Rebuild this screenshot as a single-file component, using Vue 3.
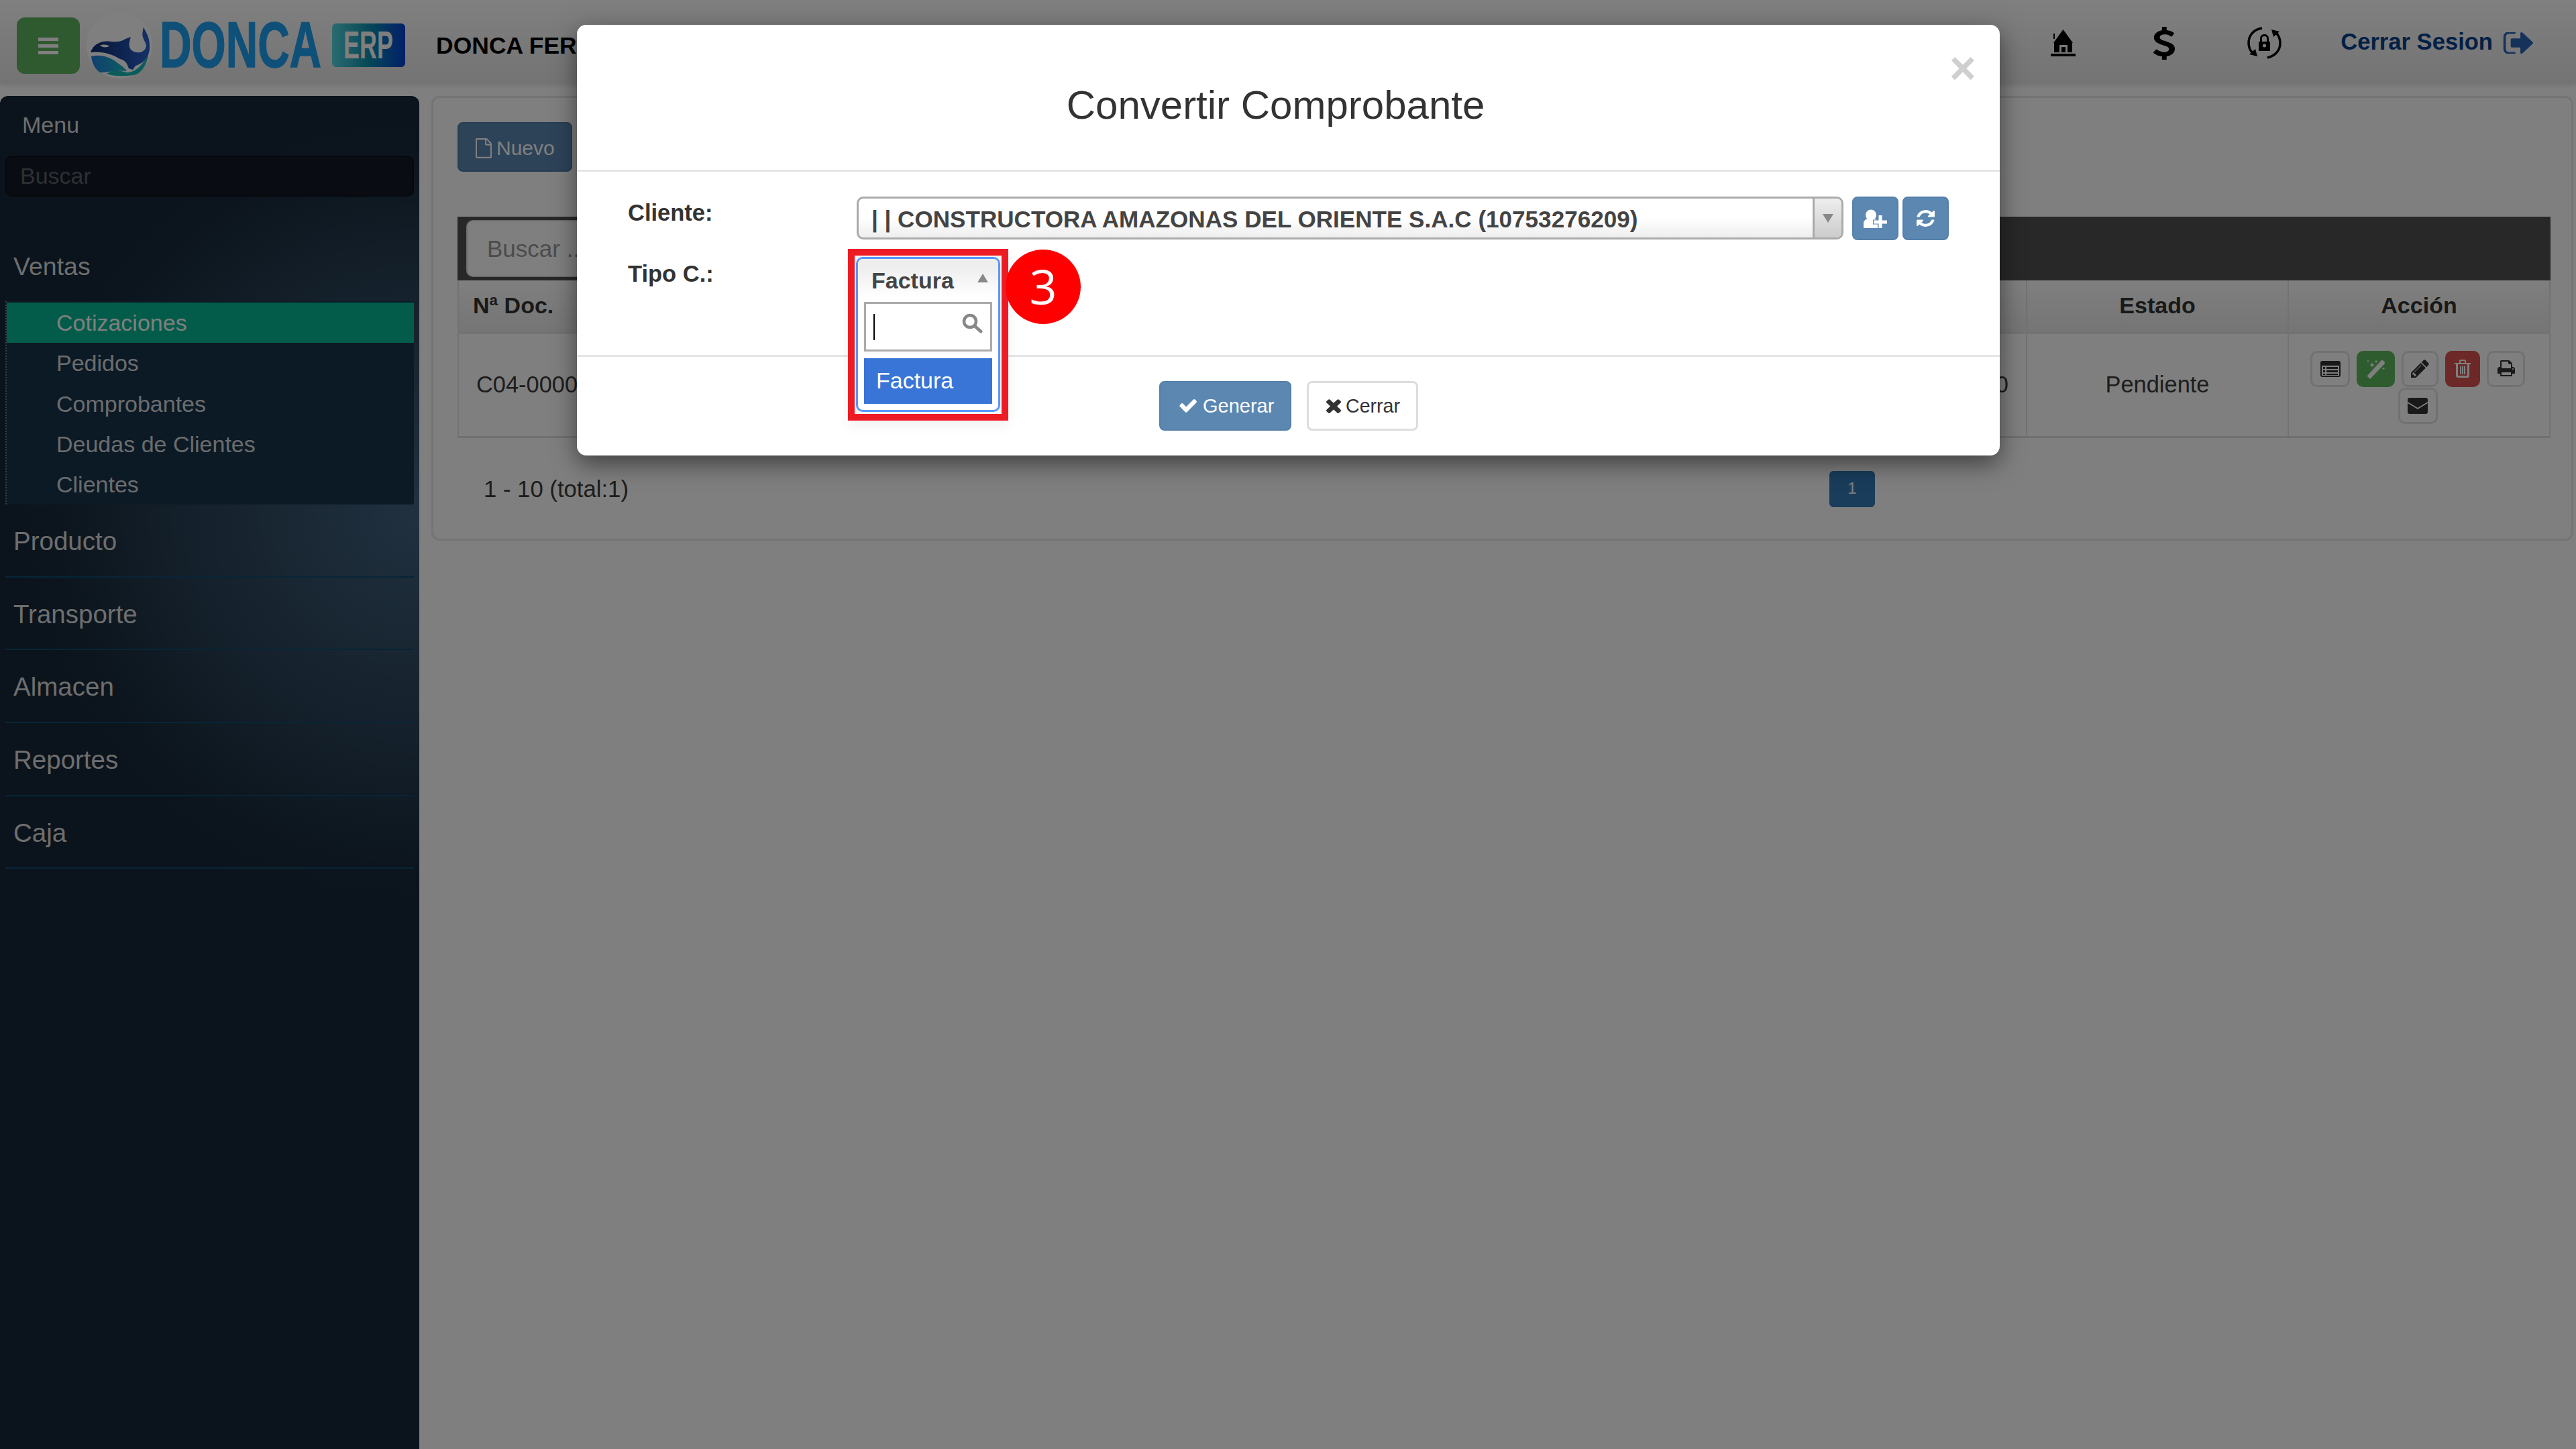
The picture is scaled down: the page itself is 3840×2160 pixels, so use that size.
<script setup>
const menu = ['Cotizaciones', 'Pedidos', 'Comprobantes', 'Deudas de Clientes', 'Clientes']
const sections = ['Producto', 'Transporte', 'Almacen', 'Reportes', 'Caja']
</script>

<template>
  <div class="page">
    <header class="topbar">
      <button class="burger" aria-label="menu">
        <i></i><i></i><i></i>
      </button>
      <div class="logo">
        <svg class="orca" viewBox="0 0 98 99" width="98" height="99">
          <defs>
            <linearGradient id="og" x1="0" x2="1" y1="0" y2="0">
              <stop offset="0" stop-color="#0c2c6c" /><stop offset="1" stop-color="#2a62d0" />
            </linearGradient>
            <linearGradient id="wg" x1="0" x2="1" y1="0" y2="0">
              <stop offset="0" stop-color="#2480e0" /><stop offset="1" stop-color="#18b8c0" />
            </linearGradient>
          </defs>
          <ellipse cx="49" cy="49.5" rx="49" ry="49.5" fill="#ffffff" />
          <path fill="url(#og)" d="M6 60C10 48 22 42 36 44c10 1 16 0 22-4l8-3c-2 7-4 13 0 19 6 6 18 6 22-2 3-6-2-10-3-14-3-6-1-12 0-18 3 8 9 14 9 28 1 16-8 26-21 30l-4 6-6-2c-3-8-5-12-13-14C38 62 20 58 6 60z" />
          <path fill="#fff" d="M20 50c4-2 10-2 14 1-4 2-10 2-14-1z" />
          <path fill="url(#wg)" d="M7 66c15-4 29 2 37 8 8 6 14 10 16 14-10-2-30 2-40 2C12 84 8 76 7 66z" />
          <path fill="#18b8b8" d="M30 92c10-8 22-4 30-2 10 0 20-6 32-26-2 14-10 28-22 30-15 2-30 2-40-2z" />
        </svg>
        <span class="donca"><b>DONCA</b></span>
        <span class="erp"><b>ERP</b></span>
      </div>
      <div class="company">DONCA FERRETERIA</div>
      <nav class="actions">
        <a class="nav-ico">
          <svg width="37" height="40" viewBox="0 0 37 40">
            <path d="M4 20 18.500 0 33 20zM4 6h2v8H4z" />
            <path fill-rule="evenodd" d="M5 20h27v14H5zM13 23v11h3V26h6v8h3V23z" />
            <rect y="36" width="37" height="4" />
          </svg>
        </a>
        <a class="nav-ico">
          <svg width="33" height="49" viewBox="400 32 962 1728" preserveAspectRatio="none">
            <path d="M1362 1185q0 153-99.500 263.500t-258.500 136.500v175q0 14-9 23t-23 9h-135q-13 0-22.500-9.500t-9.500-22.500v-175q-66-9-127.500-31t-101.500-44.500-74-48-46.500-37.500-17.500-18q-17-21-2-41l103-135q7-10 23-12 15-2 24 9l2 2q113 99 243 125 37 8 74 8 81 0 142.500-43t61.500-122q0-28-15-53t-33.500-42-58.500-37.500-66-32-80-32.500q-39-16-61.500-25t-61.500-26.500-62.500-31-56.500-35.500-53.500-42.500-43.500-49-35.500-58-21-66.500-8.500-78q0-138 98-242t255-134v-180q0-13 9.500-22.500t22.500-9.500h135q14 0 23 9t9 23v176q57 6 110.500 23t87 33.500 63.500 37.500 39 29 15 14q17 18 5 38l-81 146q-8 15-23 16-14 3-27-7-3-3-14.500-12t-39-26.500-58.500-32-74.500-26-85.500-11.500q-95 0-155 43t-60 111q0 26 8.500 48t29.500 41.500 39.500 33 56 31 60.500 27 70 27.500q53 20 81 31.500t76 35 75.500 42.500 62 50 53 63.500 31.500 76.500 13 94z" />
          </svg>
        </a>
        <a class="nav-ico">
          <svg width="51" height="50" viewBox="0 0 51 50">
            <path fill="none" stroke="#000" stroke-width="3.500" d="M22 3C8 5 2 15 2 25c0 7 3 12 6 15M30 47c13-3 19-12 19-22 0-7-3-12-6-15" />
            <path d="M3 42l9-8 3 11zM48 8l-9 8-3-11z" />
            <path d="M17 23h17v14H17z" />
            <path fill="none" stroke="#000" stroke-width="3" d="M20.500 23v-5c0-6 10-6 10 0v5" />
            <circle cx="25.500" cy="29" r="2.500" fill="#fff" />
          </svg>
        </a>
        <a class="logout">
          <span>Cerrar Sesion</span>
          <svg width="46" height="32" viewBox="0 288 1632 1216" preserveAspectRatio="none">
            <path d="M704 1440q0 4 1 20t.5 26.500-3 23.500-10 19.500-20.500 6.500h-320q-119 0-203.500-84.500t-84.500-203.500v-704q0-119 84.500-203.500t203.500-84.500h320q13 0 22.500 9.500t9.500 22.500q0 4 1 20t.5 26.500-3 23.500-10 19.500-20.500 6.500h-320q-66 0-113 47t-47 113v704q0 66 47 113t113 47h288l11.500 1 11.500 3 8 5.500 7 9 2 13.500zm928-544q0 26-19 45l-544 544q-19 19-45 19t-45-19-19-45v-288h-448q-26 0-45-19t-19-45v-384q0-26 19-45t45-19h448v-288q0-26 19-45t45-19 45 19l544 544q19 19 19 45z" />
          </svg>
        </a>
      </nav>
    </header>

    <div class="layout">
      <aside class="sidebar">
        <div class="side-title">Menu</div>
        <input class="side-search" placeholder="Buscar" />
        <div class="group open">Ventas</div>
        <ul class="submenu">
          <li v-for="(m, i) in menu" :key="m" :class="{ active: i === 0 }">{{ m }}</li>
        </ul>
        <div v-for="s in sections" :key="s" class="group">{{ s }}</div>
      </aside>

      <main class="panel">
        <button class="btn-new">
          <svg width="24" height="30" viewBox="128 0 1536 1792" preserveAspectRatio="none"><path d="M1596 380q28 28 48 76t20 88v1152q0 40-28 68t-68 28h-1344q-40 0-68-28t-28-68v-1600q0-40 28-68t68-28h896q40 0 88 20t76 48zm-444-244v376h376q-10-29-22-41l-313-313q-12-12-41-22zm384 1528v-1024h-416q-40 0-68-28t-28-68v-416h-768v1536h1280z" /></svg>
          Nuevo
        </button>
        <div class="toolbar"><input class="table-search" placeholder="Buscar ..." /></div>
        <table class="grid">
          <colgroup><col class="c-doc" /><col class="c-cli" /><col class="c-tot" /><col class="c-est" /><col class="c-acc" /></colgroup>
          <thead>
            <tr><th class="left">Nª Doc.</th><th></th><th></th><th>Estado</th><th>Acción</th></tr>
          </thead>
          <tbody>
            <tr>
              <td class="left doc">C04-00001</td>
              <td></td>
              <td class="right">1,250.00</td>
              <td class="center">Pendiente</td>
              <td class="acts">
                <div class="act-wrap">
                  <button class="act w59">
                    <svg width="30" height="24" viewBox="0 0 30 24"><path fill-rule="evenodd" d="M3 0h24a3 3 0 0 1 3 3v18a3 3 0 0 1-3 3H3a3 3 0 0 1-3-3V3a3 3 0 0 1 3-3zM2 7v15h26V7zM4 9h3v3H4zM9 9h17v3H9zM4 14h3v3H4zM9 14h17v3H9zM4 19h3v2H4zM9 19h17v2H9z" /></svg>
                  </button>
                  <button class="act ok w57">
                    <svg width="28" height="30" viewBox="0 0 28 30"><path d="M1 25 21 3q2-2 4 0l1 1q2 2 0 4L6 29q-1 1-2 0l-3-3q-1-.500 0-1z" fill="#fff" /><path d="M8 5l1 3 3 1-3 1-1 3-1-3-3-1 3-1zM14 1l.700 2 2 .700-2 .700-.700 2-.700-2-2-.700 2-.700zM2 1l.500 1.500L4 3l-1.500.500L2 5l-.500-1.500L0 3l1.500-.500zM25 12l.500 2 2 .500-2 .500-.500 2-.500-2-2-.500 2-.500z" fill="#fff" /></svg>
                  </button>
                  <button class="act w55">
                    <svg width="27" height="27" viewBox="128 128 1536 1536"><path d="M491 1536l91-91-235-235-91 91v107h128v128h107zm523-928q0-22-22-22-10 0-17 7l-542 542q-7 7-7 17 0 22 22 22 10 0 17-7l542-542q7-7 7-17zm-54-192l416 416-832 832h-416v-416zm683 96q0 53-37 90l-166 166-416-416 166-165q36-38 90-38 53 0 91 38l235 234q37 39 37 91z" /></svg>
                  </button>
                  <button class="act bad w52">
                    <svg width="24" height="27" viewBox="0 0 24 27"><path fill="#fff" fill-rule="evenodd" d="M0 5h24v2h-2v17a3 3 0 0 1-3 3H5a3 3 0 0 1-3-3V7H0zM7 2a2 2 0 0 1 2-2h6a2 2 0 0 1 2 2v3h-2V2H9v3H7zM5 7v17h14V7zM8 10h2v12H8zM11 10h2v12h-2zM14 10h2v12h-2z" /></svg>
                  </button>
                  <button class="act w57">
                    <svg width="28" height="26" viewBox="0 0 1792 1664"><path transform="translate(0 -128)" d="M448 1536h896v-256h-896v256zm0-640h896v-384h-160q-40 0-68-28t-28-68v-160h-640v640zm1152 64q0-26-19-45t-45-19-45 19-19 45 19 45 45 19 45-19 19-45zm128 0v416q0 13-9.500 22.500t-22.500 9.500h-224v160q0 40-28 68t-68 28h-960q-40 0-68-28t-28-68v-160h-224q-13 0-22.500-9.500t-9.500-22.500v-416q0-79 56.500-135.500t135.500-56.500h64v-544q0-40 28-68t68-28h672q40 0 88 20t76 48l152 152q28 28 48 76t20 88v256h64q79 0 135.500 56.500t56.500 135.500z" /></svg>
                  </button>
                  <button class="act w59">
                    <svg width="30" height="24" viewBox="0 0 30 24"><rect width="30" height="24" rx="3" /><path d="M0 7l15 9 15-9" fill="none" stroke="#fff" stroke-width="1.800" /></svg>
                  </button>
                </div>
              </td>
            </tr>
          </tbody>
        </table>
        <div class="pager-row">
          <span class="range">1 - 10 (total:1)</span>
          <span class="page-num">1</span>
        </div>
      </main>
    </div>

    <div class="backdrop"></div>

    <section class="modal">
      <div class="modal-head">
        <h1>Convertir Comprobante</h1>
        <span class="close">×</span>
      </div>
      <div class="modal-body">
        <div class="row">
          <label>Cliente:</label>
          <div class="select">
            <span class="select-text">| | CONSTRUCTORA AMAZONAS DEL ORIENTE S.A.C (10753276209)</span>
            <span class="select-arrow"><i></i></span>
          </div>
          <button class="btn-sq first">
            <svg width="35" height="28" viewBox="0 0 35 28"><circle cx="11" cy="8.500" r="8" fill="#fff" /><path d="M0 28v-7c0-4 3-6 6-7 3 3 7 3 10 0 2 .500 4 1.500 5 3v11z" fill="#fff" /><path d="M22.500 9h5v7.500H35v5h-7.500V28h-5v-6.500H15v-5h7.500z" fill="#fff" stroke="#5b87b1" stroke-width="2" paint-order="stroke" /></svg>
          </button>
          <button class="btn-sq">
            <svg width="27" height="25" viewBox="128 128 1536 1536" preserveAspectRatio="none"><path fill="#fff" d="M1639 1056q0 5-1 7-64 268-268 434.500t-478 166.500q-146 0-282.500-55t-243.500-157l-129 129q-19 19-45 19t-45-19-19-45v-448q0-26 19-45t45-19h448q26 0 45 19t19 45-19 45l-137 137q71 66 161 102t187 36q134 0 250-65t186-179q11-17 53-117 8-23 30-23h192q13 0 22.500 9.500t9.500 22.500zm25-800v448q0 26-19 45t-45 19h-448q-26 0-45-19t-19-45 19-45l138-138q-148-137-349-137-134 0-250 65t-186 179q-11 17-53 117-8 23-30 23h-199q-13 0-22.500-9.500t-9.500-22.500v-7q65-268 270-434.500t480-166.500q146 0 284 55.500t245 156.500l130-129q19-19 45-19t45 19 19 45z" /></svg>
          </button>
        </div>
        <div class="row second">
          <label>Tipo C.:</label>
          <div class="tipo">
            <div class="mark">
              <div class="drop">
                <div class="drop-head">
                  <span>Factura</span>
                  <i class="tri-up"></i>
                </div>
                <div class="drop-search">
                  <i class="caret"></i>
                  <svg width="31" height="30" viewBox="0 0 31 30"><circle cx="12" cy="12" r="9" fill="none" stroke="#888" stroke-width="4.500" /><path d="M19 19l9 8" stroke="#888" stroke-width="5" stroke-linecap="round" /></svg>
                </div>
                <div class="drop-option">Factura</div>
              </div>
            </div>
            <div class="badge">3</div>
          </div>
        </div>
      </div>
      <div class="modal-foot">
        <button class="btn-go">
          <svg width="26" height="22" viewBox="100 280 1571 1300" preserveAspectRatio="none"><path fill="#fff" d="M1671 566q0 40-28 68l-724 724-136 136q-28 28-68 28t-68-28l-136-136-362-362q-28-28-28-68t28-68l136-136q28-28 68-28t68 28l294 295 656-657q28-28 68-28t68 28l136 136q28 28 28 68z" /></svg>
          Generar
        </button>
        <button class="btn-close">
          <svg width="22" height="22" viewBox="300 300 1190 1250" preserveAspectRatio="none"><path fill="#333" d="M1490 1322q0 40-28 68l-136 136q-28 28-68 28t-68-28l-294-294-294 294q-28 28-68 28t-68-28l-136-136q-28-28-28-68t28-68l294-294-294-294q-28-28-28-68t28-68l136-136q28-28 68-28t68 28l294 294 294-294q28-28 68-28t68 28l136 136q28 28 28 68t-28 68l-294 294 294 294q28 28 28 68z" /></svg>
          Cerrar
        </button>
      </div>
    </section>
  </div>
</template>

<style>
html, body { margin: 0; padding: 0; background: #fff; }
</style>

<style scoped>
* { box-sizing: border-box; }
.page {
  position: relative;
  width: 3840px;
  height: 2160px;
  overflow: hidden;
  background: #fff;
  font-family: "Liberation Sans", Arial, sans-serif;
  font-size: 34px;
  color: #3a3a3a;
}
button { font-family: inherit; cursor: pointer; }

/* top bar */
.topbar {
  height: 125px;
  display: flex;
  align-items: flex-start;
  padding: 18px 64px 0 25px;
  background: linear-gradient(#ffffff, #e8e8e8);
  box-shadow: 0 2px 6px rgba(0, 0, 0, .12);
}
.burger {
  width: 94px;
  height: 84px;
  margin-top: 8px;
  border: 0;
  border-radius: 12px;
  background: #5fb35c;
  display: flex;
  flex-direction: column;
  align-items: center;
  justify-content: center;
  gap: 5px;
  padding: 0;
}
.burger i { display: block; width: 30px; height: 5px; background: #fff; }
.logo { display: flex; align-items: flex-start; margin-left: 10px; }
.orca { display: block; }
.donca {
  width: 241px;
  height: 69px;
  margin: 14px 0 0 11px;
  color: #1fa0f0;
  font-size: 96px;
  line-height: 69px;
  display: block;
  -webkit-text-stroke: 1.500px #1fa0f0;
}
.donca b { display: inline-block; transform: scaleX(.685); transform-origin: left center; }
.erp {
  width: 109px;
  height: 65px;
  margin: 17px 0 0 16px;
  border-radius: 6px;
  background: linear-gradient(90deg, #56d8e0, #0e90b0 50%, #0440d0);
  color: #fff;
  font-size: 57px;
  line-height: 65px;
  padding-left: 17px;
  display: block;
}
.erp b { display: inline-block; transform: scaleX(.63); transform-origin: left center; }
.company {
  margin: 32px 0 0 46px;
  font-size: 35.500px;
  font-weight: 700;
  line-height: 36px;
  color: #000;
}
.actions { margin-left: auto; display: flex; align-items: center; height: 100px; margin-top: -4px; }
.nav-ico { width: 150px; display: flex; justify-content: center; color: #000; }
.nav-ico svg { fill: #000; display: block; }
.logout {
  margin-left: 39px;
  display: flex;
  align-items: center;
  gap: 14px;
  color: #05408a;
  font-weight: 700;
  font-size: 34.600px;
}
.logout span { margin-top: -4px; }
.logout svg { fill: #2a66b4; }

/* layout */
.layout { display: flex; align-items: flex-start; height: 2035px; padding-top: 18px; }

/* sidebar */
.sidebar {
  width: 625px;
  height: 2017px;
  flex: none;
  padding: 0 8px;
  border-radius: 12px 12px 0 0;
  color: #dcdcdc;
  background: radial-gradient(circle 660px at 620px 617px, #42627f 0, #2c455c 45%, #182a3a 82%, #162838 100%);
}
.side-title { height: 89px; line-height: 86px; padding-left: 25px; }
.side-search {
  display: block;
  width: 609px;
  height: 61px;
  padding: 0 20px;
  border: 2px solid #0c1018;
  border-radius: 10px;
  background: #121826;
  font: 34px "Liberation Sans", Arial, sans-serif;
  color: #666;
}
.side-search::placeholder { color: #5c6066; opacity: 1; }
.group {
  height: 108.700px;
  line-height: 110px;
  padding-left: 12px;
  font-size: 38.500px;
  border-bottom: 2px solid #0f4a6e;
}
.group.open {
  height: 156px;
  line-height: 208px;
  font-size: 37.500px;
  border-bottom: 0;
}
.submenu {
  list-style: none;
  margin: 0;
  padding: 2px 0 0;
  height: 303px;
  border-left: 2px dotted #6c7b86;
  background: #18344c;
}
.submenu li {
  height: 60.300px;
  line-height: 61px;
  padding-left: 74px;
  font-size: 34px;
  color: #d6d8da;
}
.submenu li.active { background: #04b892; color: #fff; }

/* panel */
.panel {
  width: 3193px;
  height: 663px;
  margin-left: 18px;
  padding: 36px 34px 0 36px;
  border: 3px solid #e8e8e8;
  border-radius: 12px;
}
.btn-new {
  width: 171px;
  height: 74px;
  border: 2px solid #4f7ba6;
  border-radius: 8px;
  background: #5b87b1;
  color: #fff;
  font-size: 30px;
  display: flex;
  align-items: center;
  gap: 7px;
  padding: 3px 0 0 25px;
}
.btn-new svg { fill: #fff; }
.toolbar { margin-top: 67px; height: 95px; width: 3120px; padding: 5px 0 0 13px; background: #505050; }
.table-search {
  display: block;
  width: 900px;
  height: 85px;
  padding: 0 29px;
  border: 2px solid #d8d8d8;
  border-radius: 10px;
  background: #fff;
  font: 35px "Liberation Sans", Arial, sans-serif;
}
.table-search::placeholder { color: #999; opacity: 1; }
.grid { table-layout: fixed; width: 3118px; border-collapse: collapse; }
.c-doc { width: 500px; }
.c-cli { width: 1400px; }
.c-tot { width: 438px; }
.c-est { width: 390px; }
.c-acc { width: 390px; }
.grid th {
  height: 77px;
  background: linear-gradient(#ffffff, #ebebeb);
  border: 2px solid #e4e4e4;
  border-bottom: 5px solid #e6e6e6;
  border-top: 0;
  font-size: 34px;
  text-align: center;
  color: #333;
}
.grid th.left { text-align: left; padding-left: 21px; }
.grid td {
  height: 156px;
  border: 2px solid #e4e4e4;
  border-bottom: 3px solid #e0e0e0;
  color: #3a3a3a;
  padding: 0 26px;
  font-size: 34.400px;
  white-space: nowrap;
  overflow: hidden;
}
.grid td.right { text-align: right; }
.grid td.center { text-align: center; }
.grid td.acts { padding: 25px 26px 0 22px; vertical-align: top; }
.act-wrap { display: flex; flex-wrap: wrap; justify-content: center; column-gap: 10px; row-gap: 1px; }
.act {
  height: 54px;
  border: 3px solid #e2e2e2;
  border-radius: 10px;
  background: #fff;
  padding: 0;
  display: flex;
  align-items: center;
  justify-content: center;
}
.act svg { display: block; fill: #333; }
.act.ok { background: #5cb85c; border-color: #5cb85c; }
.act.bad { background: #d9534f; border-color: #d9534f; }
.w59 { width: 59px; }
.w57 { width: 57px; }
.w55 { width: 55px; }
.w52 { width: 52px; }
.pager-row { display: grid; grid-template-columns: 2045px 68px; margin-top: 49px; height: 51px; }
.range { padding-left: 39px; line-height: 54px; font-size: 34.700px; color: #3a3a3a; }
.page-num {
  border-radius: 6px;
  background: #337ab7;
  color: #fff;
  font-size: 24px;
  line-height: 51px;
  text-align: center;
}

/* modal */
.backdrop { position: absolute; inset: 0; background: rgba(0, 0, 0, .5); }
.modal {
  position: absolute;
  left: 860px;
  top: 37px;
  width: 2121px;
  height: 642px;
  display: flex;
  flex-direction: column;
  background: #fff;
  border-radius: 14px;
  box-shadow: 0 12px 36px rgba(0, 0, 0, .5);
}
.modal-head {
  position: relative;
  height: 219px;
  flex: none;
  padding-right: 38px;
  border-bottom: 3px solid #e5e5e5;
  text-align: center;
}
.modal-head h1 {
  margin: 0;
  padding-top: 84px;
  font-size: 60px;
  line-height: 72px;
  font-weight: 400;
  color: #333;
}
.close {
  position: absolute;
  left: 2046px;
  top: 30px;
  font-size: 68px;
  line-height: 68px;
  font-weight: 700;
  color: #cfcfcf;
}
.modal-body { height: 273px; flex: none; padding: 37px 0 0 76px; }
.row { display: flex; align-items: flex-start; }
.row label { width: 341px; flex: none; font-size: 34.500px; font-weight: 700; color: #333; line-height: 49px; }
.select {
  width: 1471px;
  height: 64px;
  display: flex;
  align-items: stretch;
  border: 3px solid #aaa;
  border-radius: 10px;
  background: linear-gradient(#fff 50%, #eee);
  overflow: hidden;
}
.select-text { flex: 1; padding-left: 19px; font-size: 35.100px; font-weight: 700; color: #444; line-height: 62px; white-space: nowrap; }
.select-arrow {
  width: 43px;
  display: flex;
  align-items: center;
  justify-content: center;
  border-left: 3px solid #aaa;
  background: linear-gradient(#eee, #ccc);
}
.select-arrow i { width: 0; height: 0; border: 8px solid transparent; border-top: 13px solid #888; border-bottom: 0; }
.btn-sq {
  width: 69px;
  height: 65px;
  margin-left: 6px;
  padding: 0;
  border: 2px solid #5580a9;
  border-radius: 8px;
  background: #5b87b1;
  display: flex;
  align-items: center;
  justify-content: center;
}
.btn-sq.first { margin-left: 13px; }
.row.second { margin-top: 25px; }
.row.second label { line-height: 50px; }
.tipo { position: relative; height: 64px; flex: 1; }
.mark {
  position: absolute;
  left: -13px;
  top: -12px;
  width: 239px;
  height: 256px;
  padding: 2px 2px 3px;
  border: 10px solid #ed1c24;
  background: #f5f5f5;
  box-shadow: 0 8px 18px rgba(0, 0, 0, .06);
}
.drop {
  width: 215px;
  height: 231px;
  border: 3px solid #5897fb;
  border-radius: 10px;
  background: #fff;
  overflow: hidden;
}
.drop-head {
  height: 64px;
  display: flex;
  align-items: center;
  justify-content: space-between;
  padding: 0 15px 0 20px;
  background: linear-gradient(#eee 20%, #fff 90%);
  font-weight: 700;
  color: #444;
}
.tri-up { width: 0; height: 0; border: 8px solid transparent; border-bottom: 13px solid #888; border-top: 0; margin-top: -8px; }
.drop-search {
  width: 191px;
  height: 74px;
  margin-left: 9px;
  border: 3px solid #aaa;
  display: flex;
  align-items: flex-start;
  justify-content: space-between;
  padding: 14px 11px 0 11px;
}
.caret { display: block; width: 2px; height: 39px; margin-top: 1px; background: #000; }
.drop-option {
  width: 191px;
  height: 68px;
  margin: 10px 0 0 9px;
  padding-left: 18px;
  background: #3875d7;
  color: #fff;
  line-height: 66px;
}
.badge {
  position: absolute;
  left: 222px;
  top: -11px;
  width: 112px;
  height: 111px;
  border-radius: 50%;
  background: #f00;
  color: #fff;
  font-family: "Open Sans", sans-serif;
  font-size: 72px;
  line-height: 108px;
  text-align: center;
}
.modal-foot {
  flex: 1;
  display: flex;
  align-items: flex-start;
  padding: 36px 0 0 868px;
  border-top: 3px solid #e5e5e5;
  gap: 23px;
}
.btn-go, .btn-close {
  height: 74px;
  border-radius: 8px;
  font-size: 29px;
  display: flex;
  align-items: center;
  padding: 0;
}
.btn-go { width: 197px; gap: 9px; padding-left: 28px; border: 2px solid #5580a9; background: #5b87b1; color: #fff; }
.btn-close { width: 166px; gap: 7px; padding-left: 26px; border: 3px solid #ddd; background: #fff; color: #333; font-size: 28.600px; }
</style>
